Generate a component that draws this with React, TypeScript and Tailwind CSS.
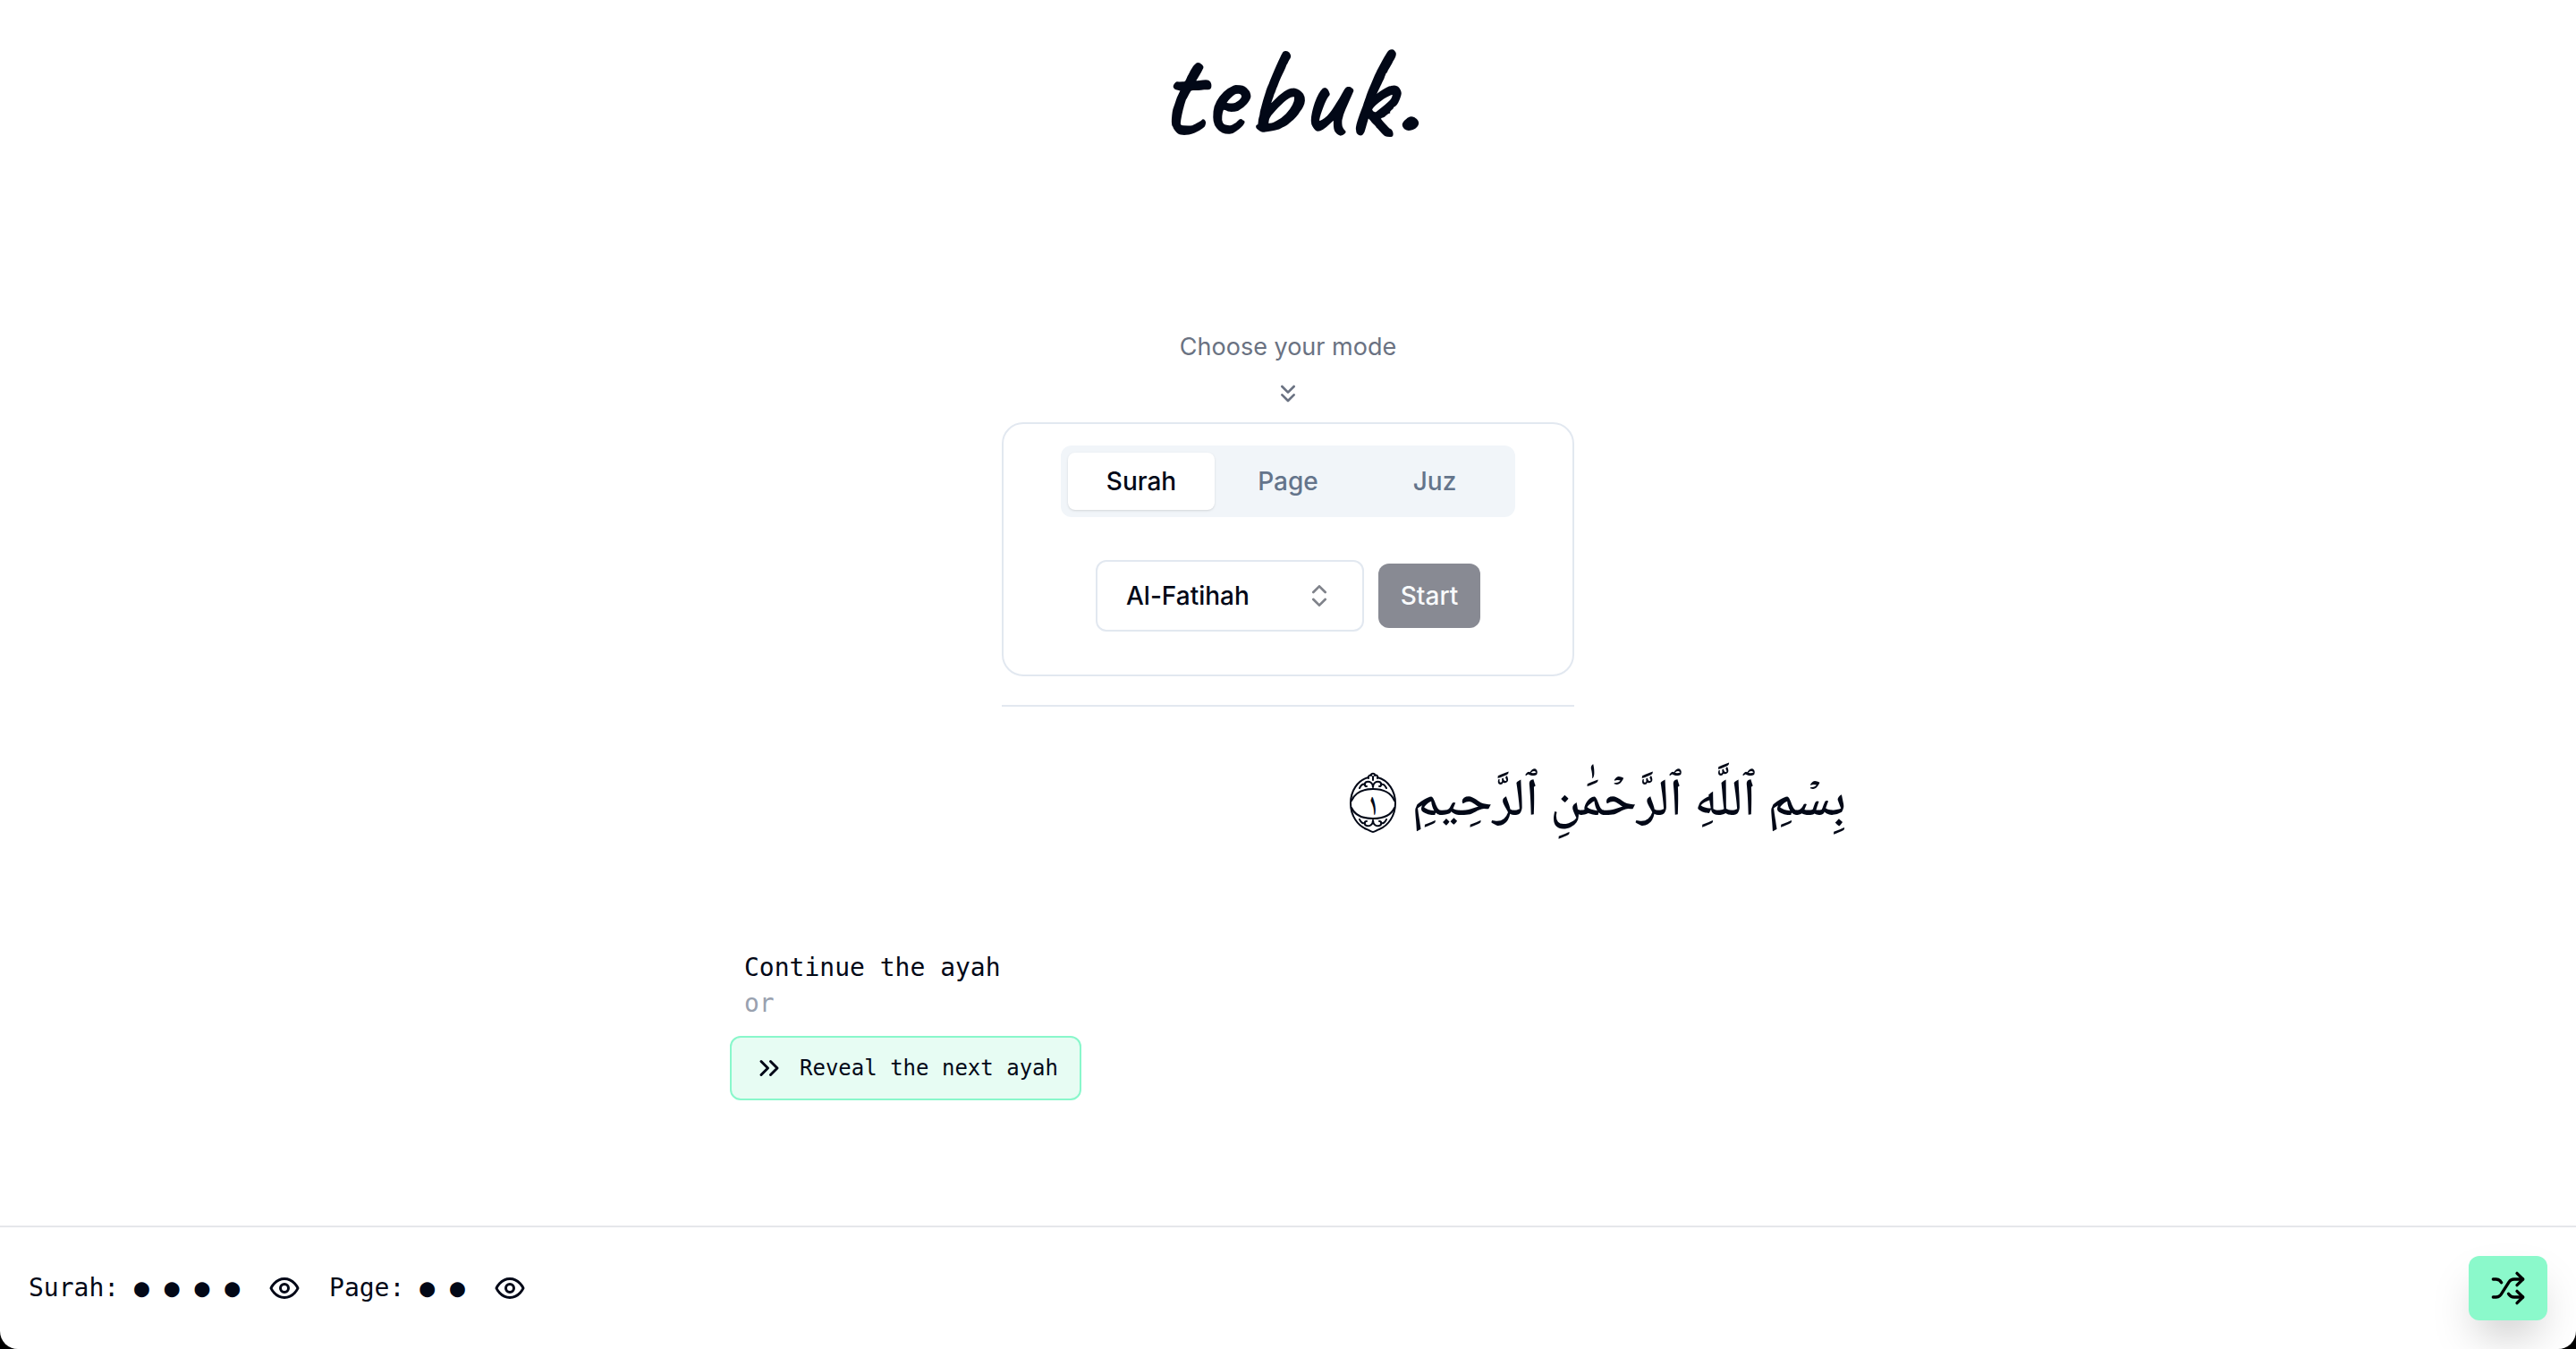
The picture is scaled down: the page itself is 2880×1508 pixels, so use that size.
import { useState } from "react";
import { ChevronsDown, ChevronsRight, ChevronsUpDown, Shuffle } from "lucide-react";

function EyeIcon() {
  return (
    <svg viewBox="0 0 24 24" className="size-9" fill="none" stroke="currentColor" strokeWidth="2" strokeLinecap="round" strokeLinejoin="round" aria-hidden="true">
      <path d="M2 12s3-7 10-7 10 7 10 7-3 7-10 7-10-7-10-7Z" />
      <circle cx="12" cy="12" r="3" />
    </svg>
  );
}

function AyahMarker({ number }: { number: string }) {
  return (
    <svg viewBox="0 0 54 70" className="h-[70px] w-[54px] shrink-0" fill="none" stroke="currentColor" strokeWidth="2" strokeLinecap="round" strokeLinejoin="round">
      <path d="M22 6C10 9 2 21 2 35c0 14 8 25 18 29 3 1 5 3 7 3s4-2 7-3c10-4 18-15 18-29 0-14-8-26-20-29" />
      <path d="M3 32c4-9 12-13 24-13s20 4 24 13" />
      <path d="M3 40c4 9 12 12 24 12s20-3 24-12" />
      <path d="M22 7c-1-3 2-4 3-3-1-3 5-3 4 0 2-1 4 0 3 3M27 5v4" />
      <path d="M27 17c0-5-4-7-7-6-3 1-3 5 0 5M27 17c0-5 4-7 7-6 3 1 3 5 0 5M12 18c2-4 4-5 6-4M42 18c-2-4-4-5-6-4" />
      <path d="M27 54c0 5-4 7-7 6-3-1-3-5 0-5M27 54c0 5 4 7 7 6 3-1 3-5 0-5M12 53c2 4 4 5 6 4M42 53c-2 4-4 5-6 4" />
      <text x="27" y="45" textAnchor="middle" fill="currentColor" stroke="none" className="font-['Amiri',serif] text-[32px]">{number}</text>
    </svg>
  );
}

const modes = ["Surah", "Page", "Juz"];

function HiddenField({ label, dots }: { label: string; dots: string }) {
  return (
    <div className="flex items-center gap-8">
      <span className="whitespace-pre">{label}: {dots}</span>
      <button type="button" aria-label={`Show ${label}`}><EyeIcon /></button>
    </div>
  );
}

export default function App() {
  const [mode, setMode] = useState("Surah");
  return (
    <div className="min-h-screen bg-black">
      <div className="flex min-h-screen flex-col rounded-b-[20px] bg-white font-['Inter',sans-serif] text-[28px] leading-10 text-[#020817]">
        <header className="flex h-[220px] justify-center pt-8">
          <h1 className="font-['Caveat',cursive] text-[144px] leading-[144px] font-medium [-webkit-text-stroke:2px_#020817]">tebuk.</h1>
        </header>
        <main className="flex grow flex-col items-center pt-[148px]">
          <p className="text-[27px] text-gray-500">Choose your mode</p>
          <ChevronsDown className="mt-4 mb-4 size-8 text-gray-500" />
          <section className="flex w-full max-w-[640px] flex-col items-center rounded-3xl border-2 border-slate-200 px-8 pt-6 pb-12 font-medium">
            <div role="tablist" className="grid h-20 w-[508px] grid-cols-3 rounded-xl bg-slate-100 p-2 text-[#64748b]">
              {modes.map((m) => (
                <button key={m} type="button" role="tab" aria-selected={m === mode} onClick={() => setMode(m)}
                  className="rounded-lg aria-selected:bg-white aria-selected:text-[#020817] aria-selected:shadow-sm">
                  {m}
                </button>
              ))}
            </div>
            <div className="mt-12 flex items-center gap-4">
              <div className="relative">
                <select aria-label="Surah" className="h-20 w-[300px] appearance-none rounded-xl border-2 border-slate-200 bg-white pl-8">
                  <option>Al-Fatihah</option>
                </select>
                <ChevronsUpDown className="pointer-events-none absolute top-6 right-[34px] size-8 opacity-50" />
              </div>
              <button type="button" className="h-[72px] w-[114px] rounded-xl bg-[#888a93] text-slate-50">Start</button>
            </div>
          </section>
          <hr className="mt-8 w-full max-w-[640px] border-t-2 border-slate-200" />
          <div className="flex w-full max-w-[1280px] flex-col px-4 pt-12">
            <div dir="rtl" className="flex h-[120px] items-center gap-4">
              <p lang="ar" className="font-['Noto_Naskh_Arabic','Amiri',serif] text-[59px] leading-[120px] font-medium">بِسۡمِ ٱللَّهِ ٱلرَّحۡمَٰنِ ٱلرَّحِيمِ</p>
              <AyahMarker number="١" />
            </div>
            <div className="mt-[104px] flex flex-col items-start font-['DejaVu_Sans_Mono',monospace]">
              <p className="px-4">Continue the ayah</p>
              <p className="px-4 text-gray-400">or</p>
              <button type="button" className="mt-4 flex h-[72px] items-center gap-4 rounded-xl border-2 border-[#89f7cb] bg-[#e7fcf3] px-6 text-2xl">
                <ChevronsRight className="size-9" />
                Reveal the next ayah
              </button>
            </div>
          </div>
        </main>
        <footer className="flex h-[138px] items-center justify-between border-t-2 border-gray-200 px-8 font-['DejaVu_Sans_Mono',monospace]">
          <div className="flex items-center gap-8">
            <HiddenField label="Surah" dots="● ● ● ●" />
            <HiddenField label="Page" dots="● ●" />
          </div>
          <button type="button" aria-label="Shuffle" className="flex h-[72px] w-[88px] items-center justify-center rounded-xl bg-[#8bf9cb] text-black shadow-2xl">
            <Shuffle className="size-10" />
          </button>
        </footer>
      </div>
    </div>
  );
}
